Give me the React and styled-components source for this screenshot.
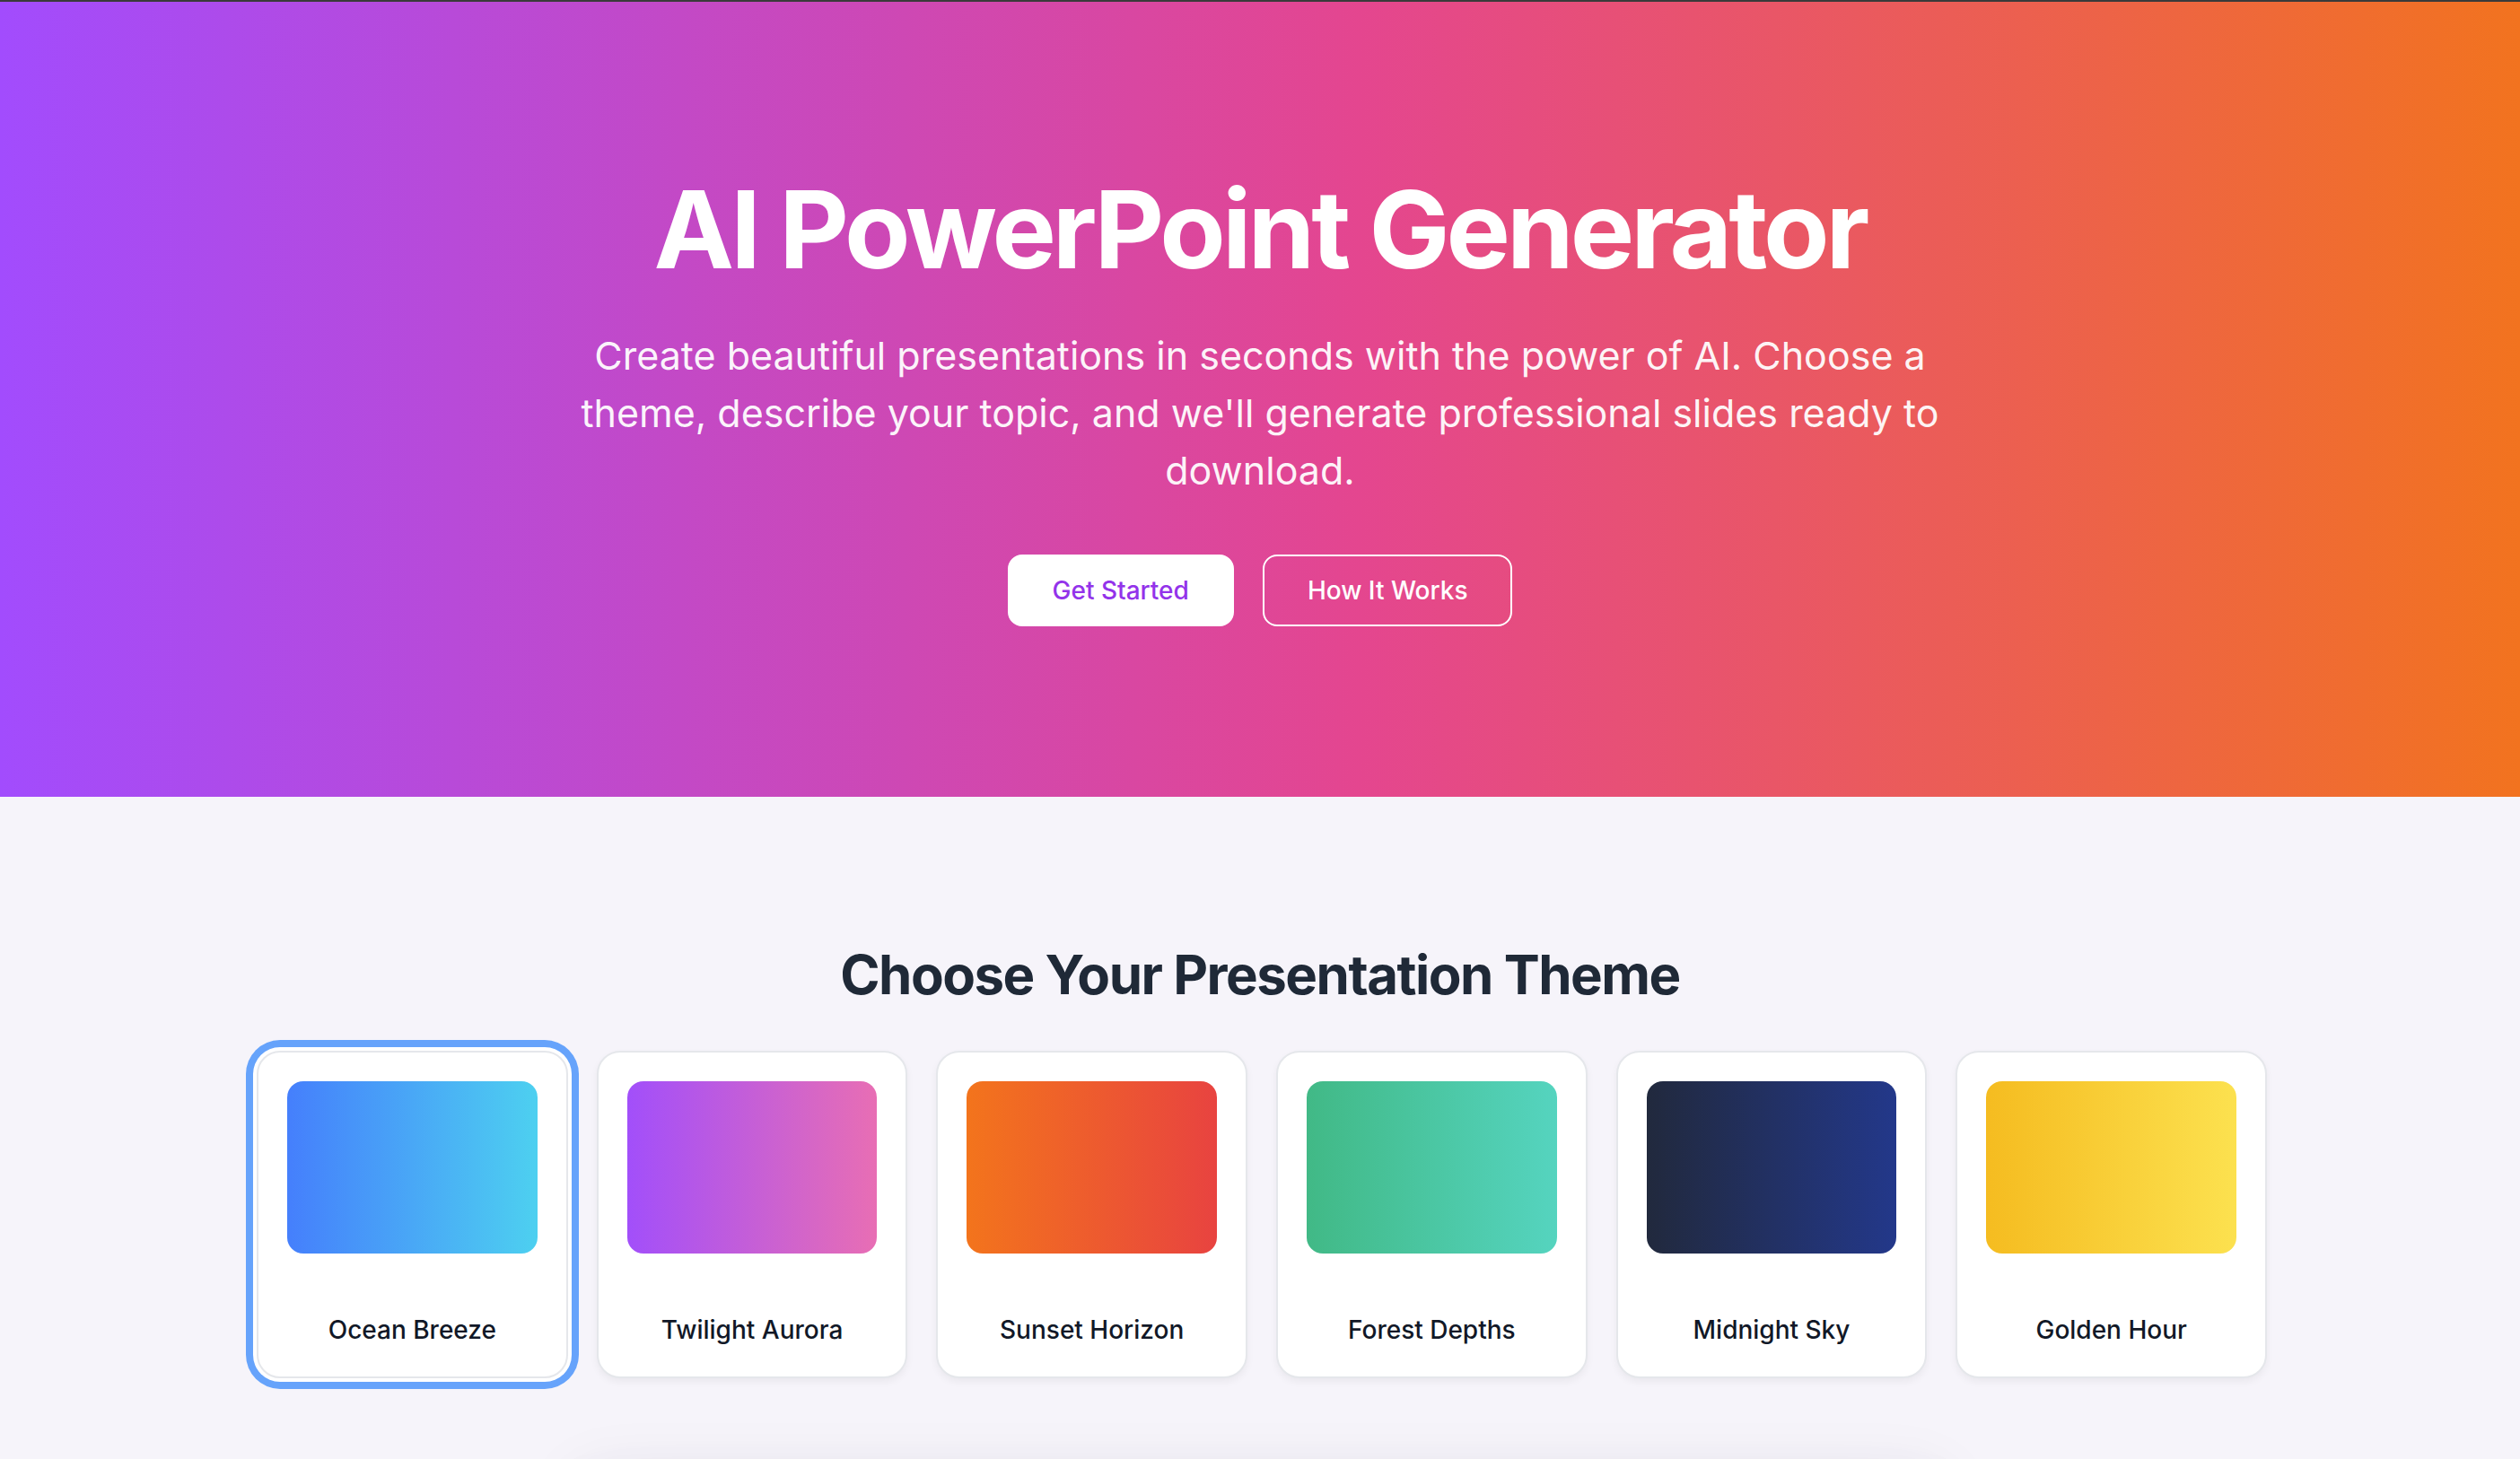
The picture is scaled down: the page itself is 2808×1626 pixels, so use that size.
import React, { useState } from 'react';
import styled, { createGlobalStyle } from 'styled-components';

const themes = [
  { name: 'Ocean Breeze', from: '#457ffc', to: '#4dd0f0' },
  { name: 'Twilight Aurora', from: '#a24ffa', to: '#e86eb4' },
  { name: 'Sunset Horizon', from: '#f3741c', to: '#e84340' },
  { name: 'Forest Depths', from: '#41b986', to: '#55d4bf' },
  { name: 'Midnight Sky', from: '#21293d', to: '#23388a' },
  { name: 'Golden Hour', from: '#f5bc20', to: '#fce14f' }
];

const GlobalStyle = createGlobalStyle`
  * {
    box-sizing: border-box;
  }

  body {
    margin: 0;
    background: #f6f4fa;
    font-family: Inter, 'Noto Sans', sans-serif;
    overflow: hidden;
  }
`;

const Page = styled.div`
  min-height: 100vh;
  background: #f6f4fa;
`;

const Hero = styled.header`
  border-top: 2px solid #3a3a3a;
  background: linear-gradient(90deg, #a24cfd 0%, #e4468f 54%, #f2731f 100%);
  padding: 188px 0 190px;
  display: flex;
  flex-direction: column;
  align-items: center;
  color: #fff;
  text-align: center;
`;

const Title = styled.h1`
  margin: 0;
  font-size: 120px;
  line-height: 132px;
  font-weight: 700;
  letter-spacing: -4px;
`;

const Subtitle = styled.p`
  margin: 42px 0 0;
  max-width: 1536px;
  font-size: 43px;
  line-height: 64px;
  font-weight: 400;
  color: rgba(255, 255, 255, 0.95);
`;

const ButtonRow = styled.div`
  display: flex;
  gap: 32px;
  margin-top: 62px;
`;

const HeroButton = styled.button`
  height: 80px;
  padding: 0 48px;
  border-radius: 16px;
  font-family: inherit;
  font-size: 28px;
  font-weight: 500;
  cursor: pointer;
  border: 2px solid #fff;
  background: ${p => (p.$outline ? 'transparent' : '#fff')};
  color: ${p => (p.$outline ? '#fff' : '#9333ea')};
`;

const ThemeSection = styled.section`
  padding: 162px 0 0;
  display: flex;
  flex-direction: column;
  align-items: center;
`;

const SectionTitle = styled.h2`
  margin: 0 0 49px;
  font-size: 60px;
  line-height: 72px;
  font-weight: 700;
  letter-spacing: -1.5px;
  color: #1f2937;
`;

const ThemeGrid = styled.div`
  width: 2240px;
  margin-left: 4px;
  display: grid;
  grid-template-columns: repeat(6, 1fr);
  gap: 32px;
`;

const ThemeCard = styled.button`
  display: flex;
  flex-direction: column;
  padding: 32px;
  background: #fff;
  border: 2px solid #e5e7eb;
  border-radius: 26px;
  cursor: pointer;
  font-family: inherit;
  box-shadow: ${p =>
    p.$selected
      ? '0 0 0 4px #fff, 0 0 0 12px #66a3fb'
      : '0 4px 8px rgba(0, 0, 0, 0.05)'};
`;

const Swatch = styled.div`
  height: 192px;
  border-radius: 18px;
  background: linear-gradient(90deg, ${p => p.$from}, ${p => p.$to});
`;

const ThemeName = styled.span`
  margin-top: 65px;
  font-size: 28px;
  line-height: 40px;
  font-weight: 500;
  color: #111827;
  text-align: center;
`;

// next panel starts just below the fold, only its shadow shows
const FormPanel = styled.div`
  margin-top: 104px;
  width: 1536px;
  min-height: 400px;
  background: #fff;
  border-radius: 32px;
  box-shadow: 0 50px 100px -24px rgba(0, 0, 0, 0.25), 0 0 70px rgba(40, 30, 70, 0.07);
`;

const App = () => {
  const [selected, setSelected] = useState(0);

  return (
    <Page>
      <GlobalStyle />
      <Hero>
        <Title>AI PowerPoint Generator</Title>
        <Subtitle>
          Create beautiful presentations in seconds with the power of AI. Choose a theme, describe
          your topic, and we'll generate professional slides ready to download.
        </Subtitle>
        <ButtonRow>
          <HeroButton>Get Started</HeroButton>
          <HeroButton $outline>How It Works</HeroButton>
        </ButtonRow>
      </Hero>

      <ThemeSection>
        <SectionTitle>Choose Your Presentation Theme</SectionTitle>
        <ThemeGrid>
          {themes.map((t, idx) => (
            <ThemeCard key={t.name} $selected={selected === idx} onClick={() => setSelected(idx)}>
              <Swatch $from={t.from} $to={t.to} />
              <ThemeName>{t.name}</ThemeName>
            </ThemeCard>
          ))}
        </ThemeGrid>
        <FormPanel />
      </ThemeSection>
    </Page>
  );
};

export default App;
